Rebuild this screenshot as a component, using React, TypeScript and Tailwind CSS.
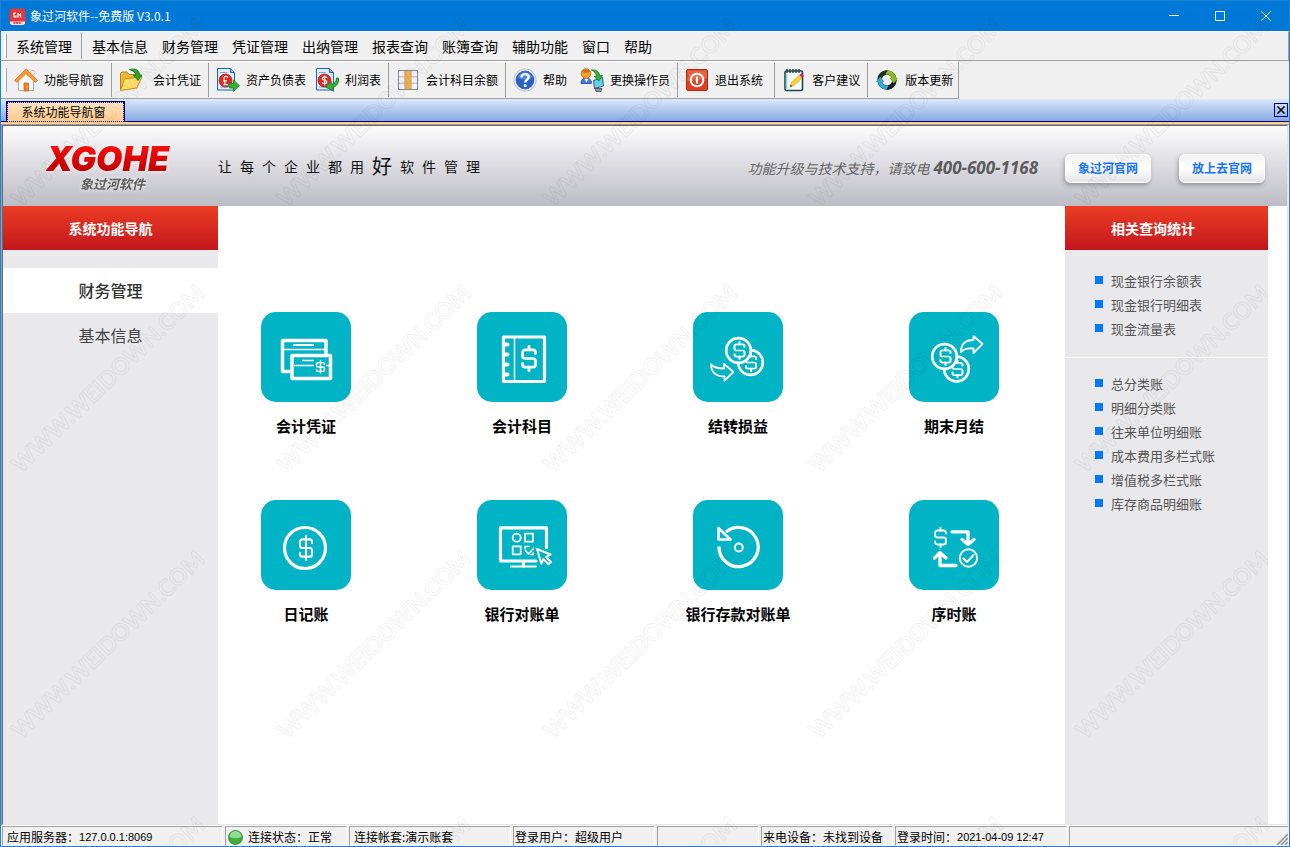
import type { ReactNode } from 'react';

const menus = [
  '基本信息',
  '财务管理',
  '凭证管理',
  '出纳管理',
  '报表查询',
  '账簿查询',
  '辅助功能',
  '窗口',
  '帮助',
];

const slogan = ['让', '每', '个', '企', '业', '都', '用', '好', '软', '件', '管', '理'];

const cashReports = ['现金银行余额表', '现金银行明细表', '现金流量表'];
const ledgers = [
  '总分类账',
  '明细分类账',
  '往来单位明细账',
  '成本费用多栏式账',
  '增值税多栏式账',
  '库存商品明细账',
];

/* ---------- toolbar icons, 24 x 24 ---------- */

function ToolIcon({ children }: { children: ReactNode }) {
  return (
    <svg viewBox="0 0 24 24" className="size-6 shrink-0" aria-hidden="true">
      {children}
    </svg>
  );
}

const HomeIcon = () => (
  <ToolIcon>
    <path d="M4.500 12v10.500h15V12L12 5z" fill="#f7f7fa" stroke="#a9adb8" />
    <path d="M17 2.500h3v5l-3-3z" fill="#fff" stroke="#b5b8c2" strokeWidth=".8" />
    <path d="M12 1 .5 12.500l2.300 1.800L12 5.600l9.200 8.700 2.300-1.800z" fill="#ff9a35" stroke="#e06a12" strokeWidth=".8" />
    <path d="M10 15h4.500v8H10z" fill="#f58220" stroke="#c85c0a" strokeWidth=".7" />
    <path d="M13 18.500v1" stroke="#fff3c9" />
  </ToolIcon>
);

const FolderIcon = () => (
  <ToolIcon>
    <path d="M1.500 22V5.500L3 4h5l2 2.500h7V12" fill="#e9b93c" stroke="#b98512" />
    <path d="M1.500 22.500 5.500 11l17.500-2.500L18 20z" fill="#ffdd68" stroke="#c4921c" />
    <path d="M10.500 1.500c6-1.500 9.500.5 10.200 5.500H23l-4 5.500-4.500-5H17c-.5-3-2.500-4.500-6.500-6z" fill="#2fa52d" stroke="#12711a" strokeWidth=".8" />
  </ToolIcon>
);

const Sheet = ({ children }: { children: ReactNode }) => (
  <ToolIcon>
    <path d="M1.500.5h13l4 4v17.500h-17z" fill="#e3eefc" stroke="#1e63b8" />
    <path d="M14.500.5v4h4" fill="#8ab7ee" stroke="#1e63b8" />
    <path d="M4 4.500h7M4 19h8" stroke="#7da7dc" />
    <circle cx="9.500" cy="12.500" r="6.500" fill="#e32a20" stroke="#a5140f" strokeWidth=".7" />
    {children}
  </ToolIcon>
);

const BalanceIcon = () => (
  <Sheet>
    <path d="M12 9.500c-2-2-4.500-.8-4 1.500l1 4c0 1.200-.6 1.500-1.500 1.700h5M7 12.800h4" fill="none" stroke="#fff" strokeWidth="1.200" />
    <path d="M12 15.500h5.500V12l6 5.800-6 5.700V20h-4z" fill="#38ae36" stroke="#167a20" strokeWidth=".8" />
  </Sheet>
);

const ProfitIcon = () => (
  <Sheet>
    <path d="M12 9.800c-1.300-1.700-4.800-1.300-4.600.8.200 2 4.500 1.200 4.500 3.400 0 2-3.400 2.300-4.700.5M9.600 7.500v9.800" fill="none" stroke="#fff" strokeWidth="1.200" />
    <path d="M23.500 10c.5 5-1.500 8.500-6 9.500l1.200 3.800L10.500 19l5.500-5.500.8 2.800c3-.8 4.700-2.800 4.700-6.300z" fill="#38ae36" stroke="#167a20" strokeWidth=".8" />
  </Sheet>
);

const GridIcon = () => (
  <ToolIcon>
    <path d="M2.500 2.500h19v19h-19z" fill="#f2f2fb" />
    <path d="M8.800 2.500h6.400v19H8.800z" fill="#fbb13c" />
    <path d="M2.500 8.800h19M2.500 15.200h19M8.800 2.500v19M15.200 2.500v19" stroke="#b9a58f" strokeWidth=".8" />
    <path d="M2.500 2.500h19v19h-19z" fill="none" stroke="#85859c" />
  </ToolIcon>
);

const HelpIcon = () => (
  <ToolIcon>
    <circle cx="12" cy="12" r="11.200" fill="#e8eef8" stroke="#a9bad6" strokeWidth=".8" />
    <circle cx="12" cy="12" r="9" fill="#2a62c4" stroke="#1b469c" strokeWidth=".6" />
    <path d="M4.500 9.500a8 8 0 0 1 15 0c-4 2.500-10 3-15 0z" fill="#6c9ae6" opacity=".6" />
    <path d="M8.500 9.500c0-4.500 7.500-4.300 7.200-.3-.2 2.600-3.500 2.600-3.500 5.300" fill="none" stroke="#fff" strokeWidth="2.400" />
    <circle cx="12.200" cy="17.600" r="1.500" fill="#fff" />
  </ToolIcon>
);

const SwitchUserIcon = () => (
  <ToolIcon>
    <path d="M1 15.500c0-4 2-5.500 5-5.500s5.500 1.500 5.500 5.500z" fill="#4b78d8" stroke="#25499f" strokeWidth=".8" />
    <path d="m4.500 10.500 2 4 2-4z" fill="#fff" />
    <circle cx="6" cy="5.500" r="4.800" fill="#f6a02a" stroke="#b5680e" strokeWidth=".8" />
    <path d="M2 4.500C3 1 8.500.5 10 4c-3 1-5.500.5-8 .5z" fill="#c9701a" />
    <path d="M13.500 12.500 22.500 9.500l1 8.500-9 2.500z" fill="#5fd3ee" stroke="#44566a" />
    <path d="M15 20.500h7l-1 3h-5z" fill="#8d939b" stroke="#4a4f57" strokeWidth=".8" />
    <path d="M11.500 2c4.500-.5 7.500 1.500 8.300 5.500h2.700L18.800 13l-4.600-4.500h2.600c-.5-3-2-4.800-5.300-6.500z" fill="#36b234" stroke="#14731c" strokeWidth=".8" />
  </ToolIcon>
);

const ExitIcon = () => (
  <ToolIcon>
    <rect x="1.500" y="1.500" width="21" height="21" rx="1.500" fill="#dd4020" stroke="#b52c12" />
    <path d="M2.500 2.500h19v8c-6 2-13 3-19 2z" fill="#ee7452" opacity=".7" />
    <circle cx="12" cy="12" r="6.300" fill="none" stroke="#fff" strokeWidth="2" />
    <path d="M12 8.500v7" stroke="#fff" strokeWidth="2.200" />
  </ToolIcon>
);

const NoteIcon = () => (
  <ToolIcon>
    <rect x="3" y="3" width="17.500" height="19.500" rx="1.500" fill="#f7fbfb" stroke="#1d4850" strokeWidth="1.600" />
    <path d="M4.500 6v15" stroke="#7dd5df" strokeWidth="1.500" />
    <path d="M5 1v4M8 1v4M11 1v4M14 1v4M17 1v4" stroke="#263c42" strokeWidth="1.400" />
    <path d="m8 19 1.500-4.500 8-7.500 2.500 2.800-8 7.500z" fill="#ffd42e" stroke="#d69a0c" strokeWidth=".7" />
    <path d="m17.500 7 2-1.700 2.500 2.700-2 1.800z" fill="#e3127e" />
    <path d="M8 19l.8-2.300 1.300 1.400z" fill="#3a2c12" />
  </ToolIcon>
);

const UpdateIcon = () => (
  <ToolIcon>
    <circle cx="12" cy="12" r="7.500" fill="none" stroke="#15201c" strokeWidth="4.500" />
    <path d="M10 2.800c5-1 10 1.500 11.200 7.200H23l-4.200 5.500-4.300-5.500h2.300c-.8-2.500-3-3.800-5.800-3.300z" fill="#86bd22" />
    <path d="M14 21.200c-5 1-10-1.500-11.200-7.200H1l4.200-5.500L9.500 14H7.200c.8 2.500 3 3.800 5.800 3.300z" fill="#37a8cf" />
    <path d="M3.500 8.500C5 4.500 9 2 13 2.500l-3 3.800C8 6.800 7 8 6.500 9.500L5.200 8z" fill="#22331a" />
    <path d="M20.500 15.500C19 19.500 15 22 11 21.500l3-3.800c2-.5 3-1.700 3.500-3.200l1.300 1.500z" fill="#13222b" />
  </ToolIcon>
);

const toolGroups = [
  [{ text: '功能导航窗', icon: <HomeIcon /> }],
  [{ text: '会计凭证', icon: <FolderIcon />, pad: 'pl-1' }],
  [
    { text: '资产负债表', icon: <BalanceIcon /> },
    { text: '利润表', icon: <ProfitIcon /> },
  ],
  [{ text: '会计科目余额', icon: <GridIcon /> }],
  [
    { text: '帮助', icon: <HelpIcon />, pad: 'pr-1' },
    { text: '更换操作员', icon: <SwitchUserIcon /> },
  ],
  [{ text: '退出系统', icon: <ExitIcon />, pad: 'pr-1' }],
  [{ text: '客户建议', icon: <NoteIcon /> }],
  [{ text: '版本更新', icon: <UpdateIcon /> }],
];

/* ---------- tile icons, 90 x 90 ---------- */

function Dollar({ x, y, w, h, sw = 2, bar = false }: { x: number; y: number; w: number; h: number; sw?: number; bar?: boolean }) {
  return (
    <svg x={x} y={y} width={w} height={h} viewBox="-1 -1 14 22" preserveAspectRatio="none" strokeWidth={sw}>
      <path d="M11 6V5a2 2 0 0 0-2-2H3a2 2 0 0 0-2 2v3a2 2 0 0 0 2 2h6a2 2 0 0 1 2 2v3a2 2 0 0 1-2 2H3a2 2 0 0 1-2-2v-1" />
      <path d={bar ? 'M6 0v20' : 'M6 0v3M6 17v3'} />
    </svg>
  );
}

const tiles = [
  {
    name: '会计凭证',
    icon: (
      <>
        <path d="M28 59.500h-6.500v-31H65V41" strokeWidth="3.500" />
        <path d="M23 37.500h41" strokeWidth="1.500" />
        <path d="M32 33h21" strokeWidth="2" strokeLinecap="butt" />
        <rect x="31" y="43.500" width="38.500" height="23" strokeWidth="3.500" fill="#00b4c5" />
        <path d="M41 48.500h12M33 53.500h20M65 53.500h4" strokeWidth="1.500" strokeLinecap="butt" />
        <Dollar x={54} y={48} w={11} h={14} sw={2} bar />
      </>
    ),
  },
  {
    name: '会计科目',
    icon: (
      <>
        <rect x="26.500" y="25" width="41" height="44.500" strokeWidth="3.200" />
        <path d="M37.500 26v43" strokeWidth="1.500" />
        <path d="M28 32.500h2.500M28 42.500h2.500M28 52.500h2.500M28 62.500h2.500" strokeWidth="4" />
        <Dollar x={43} y={33} w={18} h={27} sw={2.2} />
      </>
    ),
  },
  {
    name: '结转损益',
    icon: (
      <>
        <circle cx="57.500" cy="50.500" r="12.300" strokeWidth="2.700" />
        <Dollar x={51} y={41} w={14} h={19} />
        <circle cx="45.500" cy="38.500" r="12.300" strokeWidth="2.700" fill="#00b4c5" />
        <Dollar x={39.5} y={29} w={14} h={19} />
        <path d="M18 52.500Q22 56.500 31 56.500V52l9.500 8-9 8.500v-4Q18.500 64.500 18 52.500z" strokeWidth="1.800" />
      </>
    ),
  },
  {
    name: '期末月结',
    icon: (
      <>
        <circle cx="47.500" cy="57" r="12.300" strokeWidth="2.700" />
        <Dollar x={41.5} y={47.5} w={14} h={19} />
        <circle cx="35.500" cy="44.500" r="12.300" strokeWidth="2.700" fill="#00b4c5" />
        <Dollar x={29.5} y={35} w={14} h={19} />
        <path d="M52 40Q52 28 64.500 28v-4l9 8-9 9v-4.500Q56 35.500 52 40z" strokeWidth="1.800" />
      </>
    ),
  },
  {
    name: '日记账',
    icon: (
      <>
        <circle cx="44" cy="48" r="20.500" strokeWidth="3.200" />
        <Dollar x={36.5} y={34.5} w={17} h={27} sw={1.7} bar />
      </>
    ),
  },
  {
    name: '银行对账单',
    icon: (
      <>
        <path d="M69.500 47.500V27.800h-46V61H59M46.500 61v5" strokeWidth="3.200" />
        <path d="M34 66.500h25" strokeWidth="2.200" />
        <circle cx="39.700" cy="37.700" r="4" strokeWidth="1.800" />
        <path d="M48 33.700h8v8h-8zM35.700 46.300h8v8h-8z" strokeWidth="1.800" />
        <path d="M48 46.500h4M48 46.500v2M48.500 50.500l3 3.500 5-5.500M56 53v1.500h-2" strokeWidth="1.700" />
        <path d="M60 49l13.500 5.500-4.500 2.500 5 5-2.500 2.300-5-5-2.200 4.200z" strokeWidth="2" fill="#00b4c5" />
      </>
    ),
  },
  {
    name: '银行存款对账单',
    icon: (
      <>
        <path d="M26 46.500A19.600 19.600 0 1 0 33 32" strokeWidth="3.300" strokeLinecap="butt" />
        <path d="M25.500 28v11.500H37.500z" strokeWidth="2.600" />
        <circle cx="45.800" cy="47.500" r="4" strokeWidth="2" />
      </>
    ),
  },
  {
    name: '序时账',
    icon: (
      <>
        <Dollar x={24} y={26.5} w={15} h={22} sw={1.8} />
        <path d="M43 31.800h16V44M53 39.500l6 5 6-5M47 65.500H31V53M25.500 58l5.500-5.500 6 5.500" strokeWidth="3.300" />
        <circle cx="59.500" cy="58" r="8.700" strokeWidth="2" />
        <path d="M54.500 58.500l3.500 3.500 6.500-7" strokeWidth="2" />
      </>
    ),
  },
];

function TitleBar() {
  return (
    <header className="flex h-[30px] items-center bg-[#0078d7] pl-2 text-white">
      <svg viewBox="0 0 17 17" className="size-[17px]" aria-hidden="true">
        <rect x=".5" y=".5" width="16" height="16" rx="3" fill="#e23a3c" />
        <path d="M1 13.500h15v2L14.500 17h-12L1 15.500z" fill="#f8dcdc" />
        <path d="M7 5H5v4h2v-1.500M9 5v4.500M11.500 5v4.500M9.500 7h2" stroke="#fff" strokeWidth="1.200" fill="none" />
        <path d="M4.500 15h8" stroke="#c22" strokeWidth="1.400" strokeDasharray="2 .6" />
      </svg>
      <h1 className="ml-1 text-xs">象过河软件--免费版 V3.0.1</h1>
      <div className="ml-auto flex h-full">
        <button className="grid w-[46px] place-items-center" aria-label="最小化">
          <svg viewBox="0 0 10 10" className="size-2.5" stroke="#fff">
            <path d="M0 4.500h10" />
          </svg>
        </button>
        <button className="grid w-[46px] place-items-center" aria-label="最大化">
          <svg viewBox="0 0 10 10" className="size-2.5" stroke="#fff" fill="none">
            <path d="M.5.5h9v9h-9z" />
          </svg>
        </button>
        <button className="grid w-[46px] place-items-center" aria-label="关闭">
          <svg viewBox="0 0 10 10" className="size-2.5" stroke="#fff">
            <path d="M0 0l10 10M10 0 0 10" />
          </svg>
        </button>
      </div>
    </header>
  );
}

function Grip() {
  return <span className="h-6 w-[3px] shrink-0 border-r border-[#a0a0a0] bg-white" />;
}

function MenuBar() {
  return (
    <nav className="flex h-[30px] items-center border-t border-r border-b border-t-white border-r-[#a0a0a0] border-b-[#a0a0a0] pl-[3px] text-sm">
      <Grip />
      <button className="pr-[9px] pl-[9px]">系统管理</button>
      <span className="mr-2.5 h-[26px] w-px bg-[#a0a0a0]" />
      <div className="flex gap-3.5">
        {menus.map((menu) => (
          <button key={menu}>{menu}</button>
        ))}
      </div>
    </nav>
  );
}

function Toolbar() {
  return (
    <div className="flex h-[38px] items-center self-start border-t border-r border-b border-t-white border-r-[#a0a0a0] border-b-[#a0a0a0] pl-[3px] text-xs">
      <Grip />
      {toolGroups.map((group, index) => (
        <div
          key={index}
          className="flex h-[34px] items-center gap-[9px] border-r border-[#a0a0a0] px-[7px] last:border-r-0 last:pr-[5px]"
        >
          {group.map((tool) => (
            <button key={tool.text} className="flex items-center gap-1.5">
              {tool.icon}
              <span className={tool.pad}>{tool.text}</span>
            </button>
          ))}
        </div>
      ))}
    </div>
  );
}

function TabStrip() {
  return (
    <div className="flex h-[23px] items-end border-b border-[#000080] bg-linear-to-b from-[#dce9fd] to-[#86a9e0] pr-px pl-[5px]">
      <button className="-mb-px h-[21px] border border-b-0 border-[#000080] bg-linear-to-b from-[#ffe6c0] to-[#ffc98a] text-xs">
        <span className="flex h-5 w-[117px] items-center justify-center border border-dotted border-[#000080] pr-1">
          系统功能导航窗
        </span>
      </button>
      <button
        className="mb-1 ml-auto grid size-[14px] place-items-center border border-[#000080]"
        aria-label="关闭标签"
      >
        <svg viewBox="0 0 8 8" className="size-2" stroke="#000" strokeWidth="1.500">
          <path d="M.5.5l7 7M7.500.5l-7 7" />
        </svg>
      </button>
    </div>
  );
}

function SiteLink({ children }: { children: ReactNode }) {
  return (
    <a
      href="#"
      className="grid h-[29px] w-[86px] place-items-center rounded-md border border-white bg-linear-to-b from-[#f2f2f2] via-white to-[#e4e4e6] text-xs font-bold text-[#1673ff] shadow-[-1px_2px_4px_rgba(0,0,0,0.3)]"
    >
      {children}
    </a>
  );
}

function Banner() {
  return (
    <div className="flex h-20 items-center bg-linear-to-b from-[#fcfcfc] to-[#bcbcc5] pr-[22px] pl-[43px]">
      <div className="mt-1 flex w-[130px] flex-col drop-shadow-[0_0_2px_#fff]">
        <span className="bg-linear-to-b from-[#ff1010] to-[#b80000] bg-clip-text font-[Inter] text-[34px] leading-8 font-black text-transparent italic">
          XGOHE
        </span>
        <span className="pl-[34px] text-[13px] leading-[18px] font-bold text-[#5c5c5c] italic">象过河软件</span>
      </div>
      <p className="ml-[42px] flex items-end gap-2 text-sm leading-5 text-[#111]">
        {slogan.map((char) => (
          <span key={char} className={char === '好' ? 'text-xl leading-5' : ''}>
            {char}
          </span>
        ))}
      </p>
      <p className="mt-1 ml-auto flex items-center gap-1 text-sm text-[#666] italic">
        功能升级与技术支持，请致电
        <b className="font-['Open_Sans'] text-[17px] text-[#5c5c5c]">400-600-1168</b>
      </p>
      <div className="mt-1 ml-[27px] flex gap-7">
        <SiteLink>象过河官网</SiteLink>
        <SiteLink>放上去官网</SiteLink>
      </div>
    </div>
  );
}

function ReportList({ items }: { items: string[] }) {
  return (
    <ul className="pl-[30px] text-[13px] leading-6 text-[#555]">
      {items.map((item) => (
        <li key={item} className="flex gap-2">
          <span className="mt-[7px] size-2 bg-[#0078ff]" />
          <a href="#">{item}</a>
        </li>
      ))}
    </ul>
  );
}

function StatusCell({ className = '', children }: { className?: string; children?: ReactNode }) {
  return (
    <div
      className={`flex shrink-0 items-center border border-t-[#a0a0a0] border-r-white border-b-white border-l-[#a0a0a0] ${className}`}
    >
      {children}
    </div>
  );
}

function StatusBar() {
  return (
    <footer className="flex h-[21px] gap-0.5 border-t border-white pl-px text-xs">
      <StatusCell className="w-[221px] pt-0.5 pl-1">
        应用服务器：<span className="font-['Liberation_Sans'] text-[11px]">127.0.0.1:8069</span>
      </StatusCell>
      <StatusCell className="w-[122px] gap-[5px] pt-0.5 pl-0.5">
        <svg viewBox="0 0 15 15" className="size-[15px]" aria-hidden="true">
          <circle cx="7.500" cy="7.500" r="7" fill="#3fae3f" stroke="#2c7d2c" strokeWidth=".8" />
          <path d="M1.500 7a6 6 0 0 1 12 0c-4 1.500-8 1.500-12 0z" fill="#93dc93" />
        </svg>
        连接状态：正常
      </StatusCell>
      <StatusCell className="w-[162px] pt-0.5 pl-1">连接帐套:演示账套</StatusCell>
      <StatusCell className="w-[142px] pt-0.5 pl-px">登录用户：超级用户</StatusCell>
      <StatusCell className="w-[102px]" />
      <StatusCell className="w-[132px] pt-0.5 pl-px">来电设备：未找到设备</StatusCell>
      <StatusCell className="w-[172px] pt-0.5 pl-px">
        登录时间：<span className="font-['Liberation_Sans'] text-[11px]">2021-04-09 12:47</span>
      </StatusCell>
      <StatusCell className="min-w-0 flex-1 items-end justify-end">
        <svg viewBox="0 0 12 12" className="size-3" stroke="#909090" strokeWidth="1.500" aria-hidden="true">
          <path d="M1 12 12 1M5 12l7-7M9 12l3-3" />
        </svg>
      </StatusCell>
    </footer>
  );
}

function Watermark() {
  return (
    <svg className="pointer-events-none absolute inset-0 size-full" aria-hidden="true">
      <defs>
        <pattern id="mark" y="241" width="266" height="266" patternUnits="userSpaceOnUse">
          <text
            transform="translate(20 232) rotate(-44)"
            className="fill-none stroke-black/5 font-[Lato] text-[23px] font-bold"
          >
            WWW.WEIDOWN.COM
          </text>
        </pattern>
      </defs>
      <rect width="100%" height="100%" fill="url(#mark)" />
    </svg>
  );
}

export default function App() {
  return (
    <div className="relative flex min-h-screen flex-col border border-[#1a82d8] bg-[#f0f0f0] font-['Noto_Sans_CJK_SC',sans-serif] text-black">
      <TitleBar />
      <MenuBar />
      <Toolbar />
      <TabStrip />
      <div className="h-0.5 bg-[#ffcf90]" />
      <div className="flex flex-1 flex-col border-t border-l border-[#a0a0a0] pr-px">
        <div className="flex flex-1 flex-col border border-t-[#696969] border-r-[#e3e3e3] border-b-[#e3e3e3] border-l-[#696969] bg-white">
          <Banner />
          <div className="flex flex-1">
            <aside className="w-[215px] shrink-0 bg-[#e9e9eb]">
              <h2 className="mb-[18px] flex h-11 items-center justify-center bg-linear-to-b from-[#ec3c24] to-[#c4141c] text-sm font-bold text-white">
                系统功能导航
              </h2>
              <button className="h-[45px] w-full bg-white pb-0.5 font-medium text-[#333]">财务管理</button>
              <button className="h-[45px] w-full pb-0.5 text-[#444]">基本信息</button>
            </aside>
            <main className="flex-1 pt-[106px] pr-[47px] pl-6">
              <div className="grid grid-cols-[repeat(4,128px)] justify-between gap-y-16">
                {tiles.map((tile) => (
                  <button key={tile.name} className="flex flex-col items-center gap-2.5">
                    <svg
                      viewBox="0 0 90 90"
                      className="size-[90px] rounded-[15px] bg-[#00b4c5]"
                      fill="none"
                      stroke="#fff"
                      strokeLinecap="round"
                      strokeLinejoin="round"
                      aria-hidden="true"
                    >
                      {tile.icon}
                    </svg>
                    <span className="pt-1 text-[15px] leading-5 font-bold">{tile.name}</span>
                  </button>
                ))}
              </div>
            </main>
            <aside className="mr-[19px] w-[203px] shrink-0 bg-[#e9e9eb]">
              <h2 className="flex h-11 items-center bg-linear-to-b from-[#ec3c24] to-[#c4141c] pl-[46px] text-sm font-bold text-white">
                相关查询统计
              </h2>
              <div className="border-b border-white pt-[19px] pb-4">
                <ReportList items={cashReports} />
              </div>
              <div className="pt-[14px]">
                <ReportList items={ledgers} />
              </div>
            </aside>
          </div>
        </div>
      </div>
      <StatusBar />
      <Watermark />
    </div>
  );
}
